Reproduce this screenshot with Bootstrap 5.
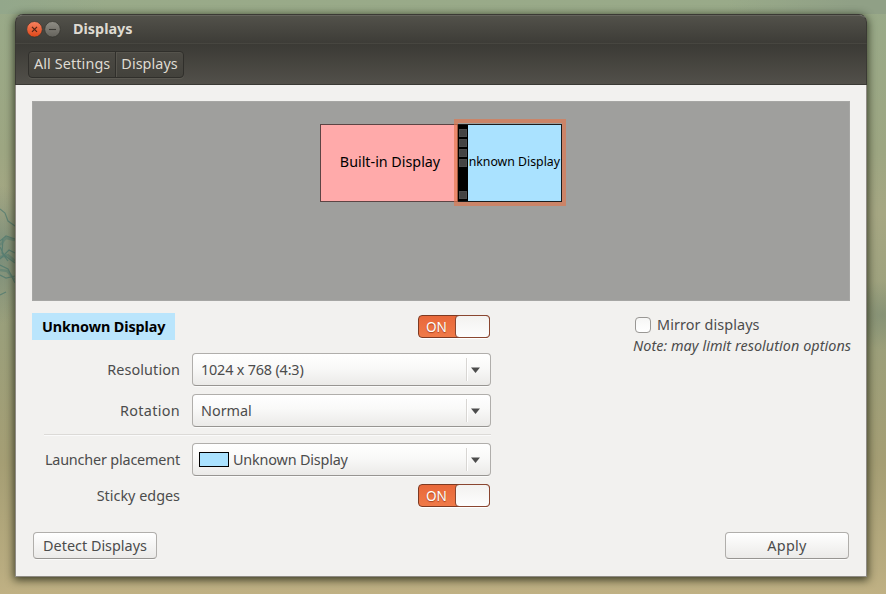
<!DOCTYPE html>
<html lang="en">
<head>
<meta charset="utf-8">
<meta name="viewport" content="width=device-width, initial-scale=1">
<title>Displays</title>
<link href="https://cdn.jsdelivr.net/npm/bootstrap@5.3.0/dist/css/bootstrap.min.css" rel="stylesheet">
<style>
  body {
    height: 594px;
    padding: 14px 19px 17px 15px;
    font: 14.4px/20px "Noto Sans", "Open Sans", sans-serif;
    color: #4c4c4c;
    background:
      radial-gradient(ellipse 40px 34px at 882px 315px, #7a8a7299, transparent),
      radial-gradient(ellipse 34px 70px at 0 255px, #748a79cc 10%, transparent),
      linear-gradient(90deg, #93a78b 0, transparent 12%, transparent 82%, #90a086 96%) 0 0/100% 14px no-repeat,
      linear-gradient(#99aa89 0, #9da682 25%, #a6a783 36%, #9a9f7b 55%, #a59e74 78%, #b9ac80 96%, #c0b184 100%);
  }
  .tree { left: 0; top: 195px; filter: blur(.6px); }
  .win {
    border: 1px solid #8f8b84;
    border-top-color: #3a3934;
    border-radius: 8px 8px 0 0;
    box-shadow: 0 2px 9px 1px rgba(20, 25, 10, .75);
    background: #f2f1ef;
  }
  .titlebar, .toolbar { margin: 0 -1px; border-left: 1px solid #3a3934; border-right: 1px solid #3a3934; }
  .titlebar { height: 28px; padding: 0 0 2px 11px; border-radius: 7px 7px 0 0; border-top: 1px solid #64635c; background: linear-gradient(#52514a, #3d3c37); color: #dfdbd2; }
  .toolbar { height: 42px; padding: 7px 0 0 12px; border-top: 1px solid #474640; border-bottom: 1px solid #3a3934; background: linear-gradient(#3b3a35, #52504a); }
  .crumbs { height: 27px; border: 1px solid #302f2b; border-radius: 4px; background: linear-gradient(#4c4a44, #43423c); box-shadow: 0 1px 0 #5b5952, inset 0 1px 0 #55534c; color: #dfdbd2; }
  .crumbs span { padding: 2px 5px; line-height: 20px; }
  .crumbs span + span { border-left: 1px solid #302f2b; box-shadow: inset 1px 0 0 #57554e; }
  .body-pane { padding: 16px; }
  .stage { height: 200px; background: #9f9f9d; border: 1px solid #a6a6a4; }
  .stage-text { color: #000; }
  .mon-a { left: 287px; top: 22px; width: 139px; height: 78px; border: 1px solid #5c4444; background: #ffaaaa; font-size: 14.3px; padding: 0 0 2px 1px; }
  .mon-b { left: 424px; top: 22px; width: 105px; height: 78px; border: 1px solid #1c1c1c; background: #aae2ff; }
  .mon-b .cap { right: 1px; top: 27px; font-size: 12.3px; }
  .mon-glow { left: 421px; top: 17px; width: 112px; height: 87px; border: 4px solid rgba(226, 118, 78, .66); }
  .strip { left: 0; top: 0; width: 10px; height: 76px; background: #000; padding: 4px 1px 0 1px; }
  .strip i { display: block; height: 8px; margin-bottom: 2px; background: #444; border: 1px solid #4d4d4d; }
  .strip i:last-child { margin-top: 24px; }
  .form-col { width: 459px; }
  .chip { width: 143px; height: 27px; padding: 4px 0 0 10px; background: #bae5fc; color: #000; font-weight: 700; letter-spacing: -.1px; }
  .switch-on { width: 72px; height: 23px; margin-right: 1px; border: 1px solid #7d3a22; border-radius: 4px; background: linear-gradient(#e8683a, #f07a48); box-shadow: 0 1px 0 #fff; }
  .switch-on b { flex: 1; padding-left: 7px; font-weight: 400; font-size: 13.6px; line-height: 21px; color: #fff; text-shadow: 0 1px 1px #a8431f; }
  .switch-on i { width: 35px; height: 23px; margin: -1px -1px -1px 0; border: 1px solid #8a4630; border-radius: 4px; background: linear-gradient(#f3f2f0, #fdfdfd); }
  .lab { width: 148px; text-align: right; }
  .combo { width: 299px; height: 33px; padding: 0 10px 0 8px; border: 1px solid #b0aeab; border-bottom-color: #979592; border-radius: 4px; background: linear-gradient(#fff, #f9f9f8 45%, #ebeae8); box-shadow: 0 1px 0 #fbfbfa; }
  .combo-swatch { padding-left: 6px; }
  .combo .sep { width: 1px; height: 23px; margin-right: 4px; background: #d8d6d3; box-shadow: 1px 0 0 #fff; }
  .swatch { width: 30px; height: 15px; margin-right: 4px; border: 1px solid #000; background: #aae2ff; }
  .rule { height: 2px; margin: 7px 0 7px 12px; background: #dcdad7; border-bottom: 1px solid #fafafa; }
  .push { width: 124px; height: 27px; padding: 0; font: inherit; line-height: 25px; color: #4c4c4c; border: 1px solid #b0aeab; border-bottom-color: #979592; border-radius: 4px; background: linear-gradient(#fff, #ebeae8); box-shadow: 0 1px 0 #fbfbfa; }
  .actions { padding: 0 1px 1px; }
  .tick { width: 16px; height: 16px; margin: 0 6px 0 2px; border: 1px solid #999794; border-radius: 4px; background: linear-gradient(#f6f6f5, #fff); }
  .side { width: 217px; padding-top: 1px; line-height: 21px; }
  .t1 { letter-spacing: -.18px; }
  .w0 { letter-spacing: .05px; }
  .w1 { letter-spacing: .1px; }
  .w3 { letter-spacing: .33px; }
</style>
</head>
<body class="overflow-hidden position-relative">
<svg class="tree position-absolute" width="16" height="110" fill="none" stroke="#41736c" stroke-width="1.2" opacity=".6">
  <path d="M0 14l5 4 3 8 7 5M0 46l6-5 9 3M0 52l4 8 11 8M3 44l-1 14 6 8M0 70l8 4 7 14M0 64l9-9 6 3M0 80l6 3 9-2M0 100l6-3"/>
  <path d="M0 50l6-7 9 2M0 62l8-2 7 6M0 75l7 1 8 9" stroke-width="2.4" opacity=".6"/>
</svg>
<main class="win position-relative h-100 d-flex flex-column">
  <header class="titlebar d-flex align-items-center">
    <svg width="36" height="18" class="flex-shrink-0">
      <defs>
        <linearGradient id="g1" x2="0" y2="1"><stop stop-color="#f98260"/><stop offset="1" stop-color="#de4718"/></linearGradient>
        <linearGradient id="g2" x2="0" y2="1"><stop stop-color="#908e86"/><stop offset="1" stop-color="#64625b"/></linearGradient>
      </defs>
      <circle cx="7.5" cy="9.3" r="7.8" fill="url(#g1)" stroke="#34332e" stroke-width=".7"/>
      <path d="M5 6.8l5 5m0-5l-5 5" stroke="#4f2416" stroke-width="1.2"/>
      <circle cx="25.5" cy="9.3" r="7.8" fill="url(#g2)" stroke="#34332e" stroke-width=".7"/>
      <path d="M22 9.5h7" stroke="#3b3a35" stroke-width="1.1"/>
    </svg>
    <span class="fw-bold ms-2 ps-1 position-relative" style="left:-2px">Displays</span>
  </header>
  <nav class="toolbar d-flex align-items-start">
    <div class="crumbs d-flex"><span class="w1">All Settings</span><span class="w0">Displays</span></div>
  </nav>
  <section class="body-pane flex-grow-1 d-flex flex-column">
    <div class="stage position-relative">
      <div class="mon-a stage-text position-absolute d-flex align-items-center justify-content-center">Built-in Display</div>
      <div class="mon-b stage-text position-absolute">
        <div class="cap position-absolute text-nowrap">Unknown Display</div>
        <div class="strip position-absolute"><i></i><i></i><i></i><i></i><i></i></div>
      </div>
      <div class="mon-glow position-absolute"></div>
    </div>
    <div class="d-flex justify-content-between pt-2 mt-1">
      <div class="form-col">
        <div class="d-flex justify-content-between align-items-center mb-2 pb-1">
          <div class="chip">Unknown Display</div>
          <div class="switch-on d-flex"><b>ON</b><i></i></div>
        </div>
        <div class="d-flex justify-content-between align-items-center mt-1 mb-2 pt-px" style="padding-top:1px">
          <div class="lab w1">Resolution</div>
          <div class="combo d-flex align-items-center"><span class="flex-grow-1 t1">1024 x 768 (4:3)</span><span class="sep"></span><svg width="9" height="6"><path d="M0 .5h9L4.5 6z" fill="#4c4c4c"/></svg></div>
        </div>
        <div class="d-flex justify-content-between align-items-center">
          <div class="lab w3">Rotation</div>
          <div class="combo d-flex align-items-center"><span class="flex-grow-1">Normal</span><span class="sep"></span><svg width="9" height="6"><path d="M0 .5h9L4.5 6z" fill="#4c4c4c"/></svg></div>
        </div>
        <div class="rule"></div>
        <div class="d-flex justify-content-between align-items-center mb-2">
          <div class="lab t1">Launcher placement</div>
          <div class="combo combo-swatch d-flex align-items-center"><span class="swatch"></span><span class="flex-grow-1 t1">Unknown Display</span><span class="sep"></span><svg width="9" height="6"><path d="M0 .5h9L4.5 6z" fill="#4c4c4c"/></svg></div>
        </div>
        <div class="d-flex justify-content-between align-items-center">
          <div class="lab">Sticky edges</div>
          <div class="switch-on d-flex"><b>ON</b><i></i></div>
        </div>
      </div>
      <div class="side">
        <div class="d-flex align-items-center"><span class="tick"></span><span class="w1">Mirror displays</span></div>
        <div class="fst-italic text-nowrap w0">Note: may limit resolution options</div>
      </div>
    </div>
    <footer class="actions d-flex justify-content-between mt-auto">
      <button type="button" class="btn push">Detect Displays</button>
      <button type="button" class="btn push w3">Apply</button>
    </footer>
  </section>
</main>
<script src="https://cdn.jsdelivr.net/npm/bootstrap@5.3.0/dist/js/bootstrap.bundle.min.js"></script>
</body>
</html>
